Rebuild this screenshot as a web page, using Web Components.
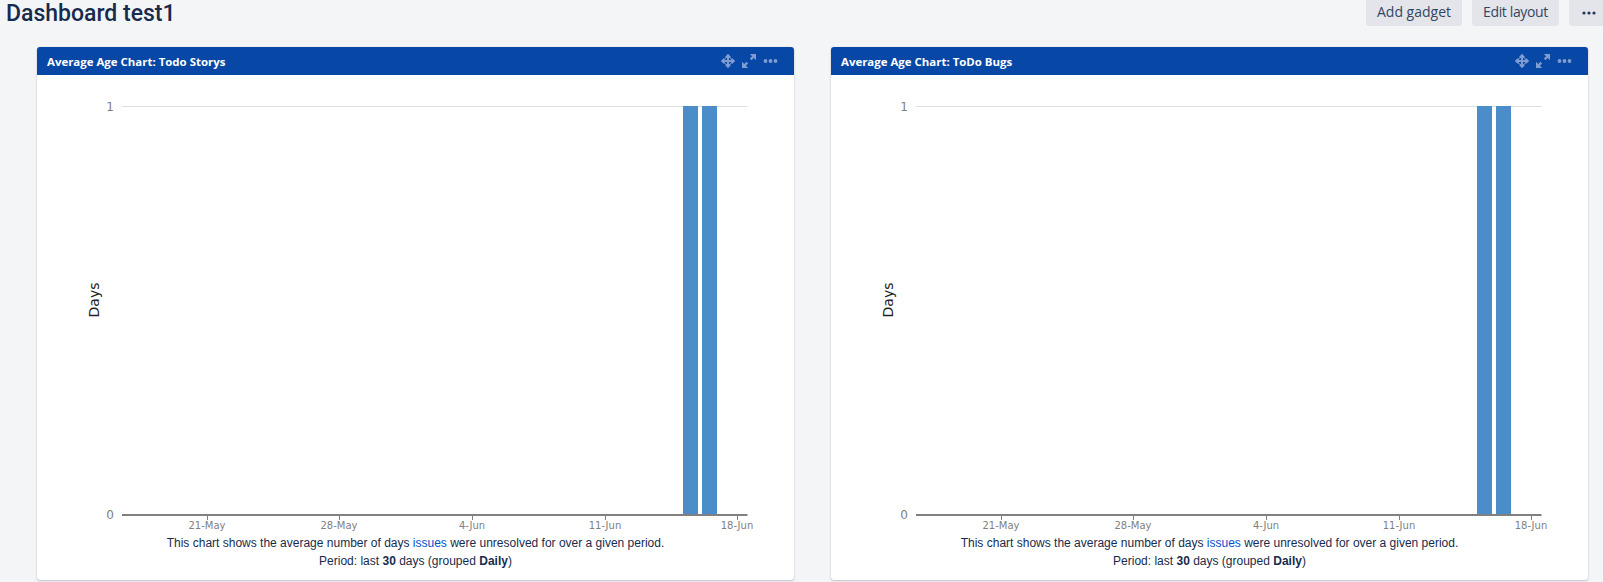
<!DOCTYPE html>
<html><head><meta charset="utf-8"><title>Dashboard test1</title>
<style>
html,body{margin:0;padding:0;height:582px;overflow:hidden;background:#f4f5f7;}
</style></head>
<body>
<dash-page>
  <dash-header slot="header" heading="Dashboard test1">
    <dash-button style="width:96px">Add gadget</dash-button>
    <dash-button style="width:87px;letter-spacing:-.35px">Edit layout</dash-button>
    <dash-button more><svg width="14" height="4" viewBox="0 0 14 4"><circle cx="2" cy="2" r="1.600" fill="#253858"/><circle cx="7" cy="2" r="1.600" fill="#253858"/><circle cx="12" cy="2" r="1.600" fill="#253858"/></svg></dash-button>
  </dash-header>
  <gadget-card heading="Average Age Chart: Todo Storys"><age-chart></age-chart></gadget-card>
  <gadget-card heading="Average Age Chart: ToDo Bugs"><age-chart></age-chart></gadget-card>
</dash-page>
<script>
customElements.define('dash-page',class extends HTMLElement{constructor(){super();this.attachShadow({mode:'open'}).innerHTML=`<style>
:host{display:block;height:582px;overflow:hidden;font-family:"Open Sans","Noto Sans",sans-serif;color:#172b4d}
.grid{display:grid;grid-template-columns:757px 757px;gap:37px;padding:0 0 0 37px;margin-top:21px}
</style><slot name="header"></slot><div class="grid"><slot></slot></div>`}});

customElements.define('dash-header',class extends HTMLElement{constructor(){super();this.attachShadow({mode:'open'}).innerHTML=`<style>
:host{display:flex;justify-content:space-between;align-items:flex-start;height:26px;padding-left:6px}
h1{margin:0;font-family:Roboto,"Open Sans",sans-serif;font-size:23px;font-weight:500;line-height:27px;color:#172b4d}
.actions{display:flex;gap:10px;margin-right:-5px}
</style><h1></h1><div class="actions"><slot></slot></div>`;this.shadowRoot.querySelector('h1').textContent=this.getAttribute('heading')}});

customElements.define('dash-button',class extends HTMLElement{constructor(){super();this.attachShadow({mode:'open'}).innerHTML=`<style>
:host{display:flex;align-items:center;justify-content:center;box-sizing:border-box;height:32px;margin-top:-6px;padding:0;background:#e3e5ea;border-radius:3px;font-family:"Open Sans","Noto Sans",sans-serif;font-size:14px;color:#344563;white-space:nowrap}
:host([more]){width:39px}
:host([more]) span{top:2.500px}
::slotted(svg){display:block}
span{position:relative;top:1px;display:flex}
</style><span><slot></slot></span>`}});

customElements.define('gadget-card',class extends HTMLElement{constructor(){super();this.attachShadow({mode:'open'}).innerHTML=`<style>
:host{display:block;box-sizing:border-box;height:533px;background:#fff;border-radius:3px;box-shadow:0 1px 2px rgba(9,30,66,.22),0 0 1px rgba(9,30,66,.18);overflow:hidden}
header{display:flex;align-items:center;justify-content:space-between;height:28px;background:#0747a6;padding:0 16px 0 10px}
h2{margin:0;font-family:"Open Sans","Noto Sans",sans-serif;font-size:11.450px;font-weight:700;color:#fff;white-space:nowrap}
.tools{display:flex;align-items:center;gap:6px}
svg{display:block}
.move{margin-right:-.500px}
</style><header><h2></h2><div class="tools">
<svg class="move" width="16" height="16" viewBox="0 0 16 16"><path d="M8 3v10M3 8h10" fill="none" stroke="#7f9dd0" stroke-width="2"/><circle cx="8" cy="8" r="3.800" fill="none" stroke="#7f9dd0" stroke-width="1.200"/><path d="M8 .8 11 3.900H5zM8 15.200 5 12.100h6zM.8 8l3.100-3v6zM15.200 8l-3.100 3V5z" fill="#7f9dd0"/></svg>
<svg width="16" height="16" viewBox="0 0 16 16" fill="#7f9dd0"><path d="M1 15V8.800L7.200 15z"/><path d="M15 1v6.200L8.800 1z"/><path d="M3.500 12.500 6.300 9.700M12.500 3.500 9.700 6.300" stroke="#7f9dd0" stroke-width="2.400"/></svg>
<svg width="15" height="16" viewBox="0 0 15 16" fill="#7f9dd0"><circle cx="2.500" cy="8" r="1.900"/><circle cx="7.500" cy="8" r="1.900"/><circle cx="12.500" cy="8" r="1.900"/></svg>
</div></header><slot></slot>`;this.shadowRoot.querySelector('h2').textContent=this.getAttribute('heading')}});

customElements.define('age-chart',class extends HTMLElement{constructor(){super();
const ticks=[[170,'21-May'],[302,'28-May'],[435,'4-Jun'],[568,'11-Jun'],[700,'18-Jun']];
this.attachShadow({mode:'open'}).innerHTML=`<style>
:host{display:block}
svg{display:block}
text{font-family:"DejaVu Sans",sans-serif;fill:#808080}
.cap{font-family:"Liberation Sans",Arial,sans-serif;font-size:12px;line-height:18px;color:#172b4d;text-align:center;margin-top:-1px}
.cap a{color:#0052cc;text-decoration:none}
.cap b{font-weight:700}
</style>
<svg width="757" height="460" viewBox="0 0 757 460">
<line x1="85" x2="710.500" y1="31.500" y2="31.500" stroke="#dedede"/>
<rect x="646" y="31" width="15" height="408" fill="#4a8dc8"/>
<rect x="665" y="31" width="15" height="408" fill="#4a8dc8"/>
<line x1="85" x2="710.500" y1="440" y2="440" stroke="#808080" stroke-width="2"/>
${ticks.map(([x,t])=>`<line x1="${x+.5}" x2="${x+.5}" y1="441" y2="445" stroke="#808080"/><text x="${x}" y="454" font-size="10" text-anchor="middle">${t}</text>`).join('')}
<text x="77" y="36" font-size="12" text-anchor="end">1</text>
<text x="77" y="444" font-size="12" text-anchor="end">0</text>
<text transform="translate(62 225) rotate(-90)" font-size="14" text-anchor="middle" style="fill:#222">Days</text>
</svg>
<div class="cap">This chart shows the average number of days <a>issues</a> were unresolved for over a given period.<br>Period: last <b>30</b> days (grouped <b>Daily</b>)</div>`}});
</script>
</body></html>
